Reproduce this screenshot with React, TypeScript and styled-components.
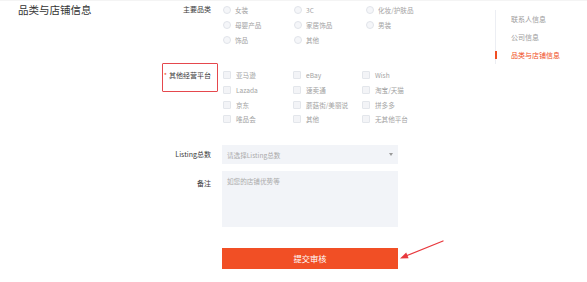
import React from "react";
import styled, { createGlobalStyle } from "styled-components";

const GlobalStyle = createGlobalStyle`
  html, body { margin: 0; padding: 0; background: #ffffff; }
  body {
    font-family: "Noto Sans CJK SC", "Noto Sans", "Liberation Sans", sans-serif;
    width: 587px;
    height: 282px;
    overflow: hidden;
  }
  * { box-sizing: border-box; }
`;

const Page = styled.div`
  display: flex;
  align-items: flex-start;
  height: 282px;
  border-top: 1px solid #f4f4f4;
`;

const TitleCol = styled.div`
  width: 150px;
  padding: 2px 0 0 18px;
  font-size: 10.5px;
  line-height: 14px;
  font-weight: 400;
  color: #333333;
`;

const Form = styled.div`
  width: 248px;
  display: flex;
  flex-direction: column;
`;

const Row = styled.div<{ $top: number }>`
  display: grid;
  grid-template-columns: 61px 176px;
  column-gap: 11px;
  align-items: start;
  margin-top: ${(p) => p.$top}px;
`;

const Label = styled.div<{ $lh: number; $pt?: number }>`
  position: relative;
  text-align: right;
  font-size: 7px;
  line-height: ${(p) => p.$lh}px;
  padding-top: ${(p) => p.$pt ?? 0}px;
  color: #3a3a3a;
  white-space: nowrap;
`;

const Required = styled.span`
  color: #f04e23;
  margin-right: 2px;
`;

const Highlight = styled.div`
  position: absolute;
  left: 12px;
  right: -7px;
  top: -5px;
  height: 29px;
  border: 1.5px solid #e5484d;
  border-radius: 1px;
  pointer-events: none;
`;

const OptionGrid = styled.div<{ $cols: string; $rh: number }>`
  display: grid;
  grid-template-columns: ${(p) => p.$cols};
  grid-auto-rows: ${(p) => p.$rh}px;
`;

const Option = styled.label`
  display: flex;
  align-items: center;
  font-size: 6.6px;
  color: #a3a3a3;
  white-space: nowrap;
`;

const Circle = styled.span`
  width: 8px;
  height: 8px;
  margin: 0 4px 0 1px;
  border-radius: 50%;
  border: 1px solid #e1e4ea;
  background: #f5f6f9;
  flex: none;
`;

const Square = styled.span`
  width: 8px;
  height: 8px;
  margin: 0 5px 0 1px;
  border-radius: 1px;
  border: 1px solid #e3e6eb;
  background: #f3f4f7;
  flex: none;
`;

const Select = styled.div`
  height: 19px;
  display: flex;
  align-items: center;
  justify-content: space-between;
  padding: 0 5px;
  background: #f2f4f8;
  font-size: 6.6px;
  color: #aaaaaa;
`;

const Caret = styled.span`
  width: 0;
  height: 0;
  border-left: 2px solid transparent;
  border-right: 2px solid transparent;
  border-top: 3px solid #9a9a9a;
`;

const TextArea = styled.textarea`
  display: block;
  width: 176px;
  height: 56px;
  border: none;
  outline: none;
  resize: none;
  margin: 0;
  padding: 6px 5px;
  background: #f2f4f8;
  font-family: inherit;
  font-size: 6.6px;
  line-height: 9px;
  color: #555;
  &::placeholder { color: #aaaaaa; }
`;

const ButtonWrap = styled.div`
  position: relative;
`;

const Submit = styled.button`
  display: block;
  width: 176px;
  height: 21px;
  border: none;
  margin: 0;
  padding: 0;
  background: #f14f25;
  color: #ffffff;
  font-family: inherit;
  font-size: 8.3px;
  line-height: 21px;
  cursor: pointer;
`;

const Arrow = styled.svg`
  position: absolute;
  left: 100%;
  top: -9px;
  overflow: visible;
`;

const Nav = styled.nav`
  margin-left: 97px;
  margin-top: 9px;
  border-left: 1px solid #eceef3;
  display: flex;
  flex-direction: column;
`;

const NavItem = styled.div<{ $active?: boolean }>`
  position: relative;
  height: 18px;
  line-height: 18px;
  padding-left: 15px;
  font-size: 7px;
  color: ${(p) => (p.$active ? "#f04e23" : "#9d9d9d")};
  white-space: nowrap;
  &::before {
    content: "";
    display: ${(p) => (p.$active ? "block" : "none")};
    position: absolute;
    left: -1.5px;
    top: 5px;
    width: 2px;
    height: 8px;
    background: #f04e23;
  }
`;

const categories = ["女装", "3C", "化妆/护肤品", "母婴产品", "家居饰品", "男装", "饰品", "其他"];
const platforms = [
  "亚马逊", "eBay", "Wish",
  "Lazada", "速卖通", "淘宝/天猫",
  "京东", "蘑菇街/美丽说", "拼多多",
  "唯品会", "其他", "无其他平台",
];

export default function App() {
  return (
    <>
      <GlobalStyle />
      <Page>
        <TitleCol>品类与店铺信息</TitleCol>
        <Form>
          <Row $top={1}>
            <Label $lh={15.3}>主要品类</Label>
            <OptionGrid $cols="71px 72px 1fr" $rh={15.3}>
              {categories.map((c) => (
                <Option key={c}>
                  <Circle />
                  {c}
                </Option>
              ))}
            </OptionGrid>
          </Row>
          <Row $top={20}>
            <Label $lh={14.7}>
              <Required>*</Required>其他经营平台
              <Highlight />
            </Label>
            <OptionGrid $cols="70px 69px 1fr" $rh={14.7}>
              {platforms.map((p, i) => (
                <Option key={p + i}>
                  <Square />
                  {p}
                </Option>
              ))}
            </OptionGrid>
          </Row>
          <Row $top={18.5}>
            <Label $lh={19}>Listing总数</Label>
            <Select>
              <span>请选择Listing总数</span>
              <Caret />
            </Select>
          </Row>
          <Row $top={7}>
            <Label $lh={9} $pt={7.5}>备注</Label>
            <TextArea placeholder="如您的店铺优势等" />
          </Row>
          <Row $top={21}>
            <Label $lh={21} />
            <ButtonWrap>
              <Submit>提交审核</Submit>
              <Arrow width="48" height="24" viewBox="0 0 48 24">
                <line x1="45" y1="2" x2="9" y2="16.5" stroke="#e8383d" strokeWidth="1.3" strokeLinecap="round" />
                <polygon points="2,19.5 10.6,19.2 8.2,13.6" fill="#e8383d" />
              </Arrow>
            </ButtonWrap>
          </Row>
        </Form>
        <Nav>
          <NavItem>联系人信息</NavItem>
          <NavItem>公司信息</NavItem>
          <NavItem $active>品类与店铺信息</NavItem>
        </Nav>
      </Page>
    </>
  );
}
